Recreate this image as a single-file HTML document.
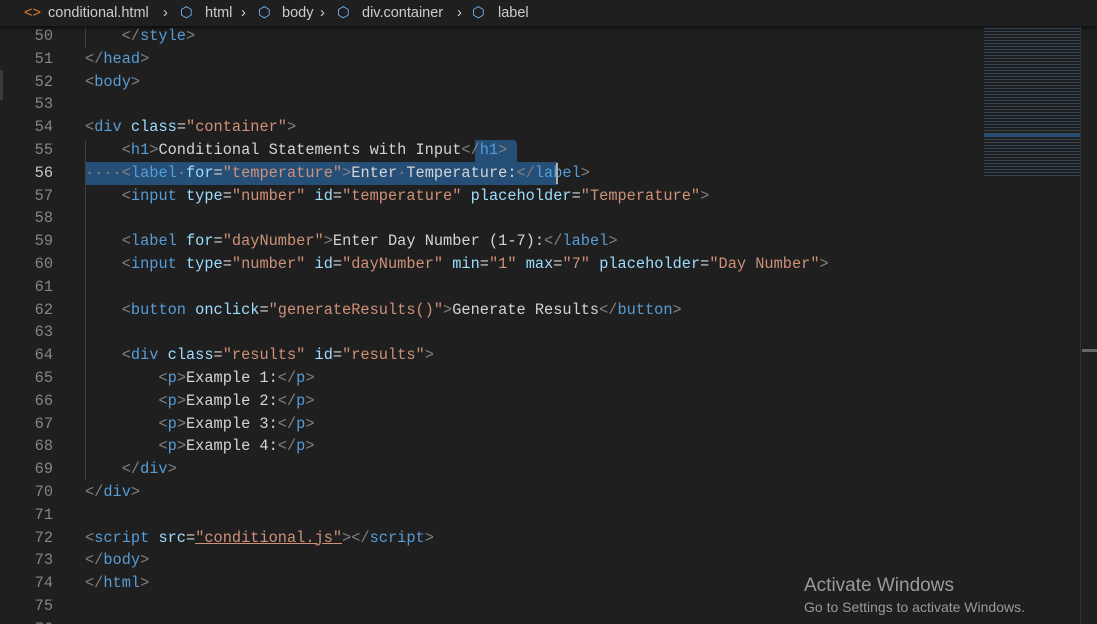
<!DOCTYPE html>
<html><head><style>
html,body{margin:0;width:1097px;height:624px;overflow:hidden}
body{background:#1f1f1f;font-family:"Liberation Mono",monospace;position:relative}
.bc{position:absolute;left:0;top:0;width:1097px;height:26px;background:#1f1f1f;font-family:"Liberation Sans",sans-serif;font-size:14.5px;color:#cccccc;line-height:26px;box-shadow:0 2px 4px #000a}
.bc span{position:absolute;top:0}
.code{position:absolute;left:0;top:25px;font-size:15.3px;line-height:22.8px;white-space:pre;color:#d4d4d4}
.ln{display:inline-block;width:53px;text-align:right;color:#858585;margin-right:32px}
.t{color:#808080}.n{color:#569cd6}.a{color:#9cdcfe}.s{color:#ce9178}
.sel{position:absolute;left:85px;top:162px;width:473px;height:23px;background:#264f78}
.sel2{position:absolute;left:475px;top:140px;width:42px;height:22px;background:#264f78;border-radius:0 4px 0 0}
.guide{position:absolute;left:85px;width:1px;background:#404040}
.wm{position:absolute;left:804px;font-family:"Liberation Sans",sans-serif;color:#9a9a9a}
</style></head><body>
<div class="sel2"></div><div class="sel"></div>
<div class="guide" style="top:26px;height:22px"></div>
<div class="guide" style="top:140px;height:340px"></div>
<div style="position:absolute;left:0;top:70px;width:3px;height:30px;background:#3a3a3a"></div>
<div class="code"><span class="ln">50</span>    <span class="t">&lt;/</span><span class="n">style</span><span class="t">&gt;</span>
<span class="ln">51</span><span class="t">&lt;/</span><span class="n">head</span><span class="t">&gt;</span>
<span class="ln">52</span><span class="t">&lt;</span><span class="n">body</span><span class="t">&gt;</span>
<span class="ln">53</span>
<span class="ln">54</span><span class="t">&lt;</span><span class="n">div</span> <span class="a">class</span>=<span class="s">"container"</span><span class="t">&gt;</span>
<span class="ln">55</span>    <span class="t">&lt;</span><span class="n">h1</span><span class="t">&gt;</span>Conditional Statements with Input<span class="t">&lt;/</span><span class="n">h1</span><span class="t">&gt;</span>
<span class="ln" style="color:#c6c6c6">56</span><span class="t">····&lt;</span><span class="n">label</span><span class="t">·</span><span class="a">for</span>=<span class="s">"temperature"</span><span class="t">&gt;</span>Enter<span class="t">·</span>Temperature:<span class="t">&lt;/</span><span class="n">label</span><span class="t">&gt;</span>
<span class="ln">57</span>    <span class="t">&lt;</span><span class="n">input</span> <span class="a">type</span>=<span class="s">"number"</span> <span class="a">id</span>=<span class="s">"temperature"</span> <span class="a">placeholder</span>=<span class="s">"Temperature"</span><span class="t">&gt;</span>
<span class="ln">58</span>
<span class="ln">59</span>    <span class="t">&lt;</span><span class="n">label</span> <span class="a">for</span>=<span class="s">"dayNumber"</span><span class="t">&gt;</span>Enter Day Number (1-7):<span class="t">&lt;/</span><span class="n">label</span><span class="t">&gt;</span>
<span class="ln">60</span>    <span class="t">&lt;</span><span class="n">input</span> <span class="a">type</span>=<span class="s">"number"</span> <span class="a">id</span>=<span class="s">"dayNumber"</span> <span class="a">min</span>=<span class="s">"1"</span> <span class="a">max</span>=<span class="s">"7"</span> <span class="a">placeholder</span>=<span class="s">"Day Number"</span><span class="t">&gt;</span>
<span class="ln">61</span>
<span class="ln">62</span>    <span class="t">&lt;</span><span class="n">button</span> <span class="a">onclick</span>=<span class="s">"generateResults()"</span><span class="t">&gt;</span>Generate Results<span class="t">&lt;/</span><span class="n">button</span><span class="t">&gt;</span>
<span class="ln">63</span>
<span class="ln">64</span>    <span class="t">&lt;</span><span class="n">div</span> <span class="a">class</span>=<span class="s">"results"</span> <span class="a">id</span>=<span class="s">"results"</span><span class="t">&gt;</span>
<span class="ln">65</span>        <span class="t">&lt;</span><span class="n">p</span><span class="t">&gt;</span>Example 1:<span class="t">&lt;/</span><span class="n">p</span><span class="t">&gt;</span>
<span class="ln">66</span>        <span class="t">&lt;</span><span class="n">p</span><span class="t">&gt;</span>Example 2:<span class="t">&lt;/</span><span class="n">p</span><span class="t">&gt;</span>
<span class="ln">67</span>        <span class="t">&lt;</span><span class="n">p</span><span class="t">&gt;</span>Example 3:<span class="t">&lt;/</span><span class="n">p</span><span class="t">&gt;</span>
<span class="ln">68</span>        <span class="t">&lt;</span><span class="n">p</span><span class="t">&gt;</span>Example 4:<span class="t">&lt;/</span><span class="n">p</span><span class="t">&gt;</span>
<span class="ln">69</span>    <span class="t">&lt;/</span><span class="n">div</span><span class="t">&gt;</span>
<span class="ln">70</span><span class="t">&lt;/</span><span class="n">div</span><span class="t">&gt;</span>
<span class="ln">71</span>
<span class="ln">72</span><span class="t">&lt;</span><span class="n">script</span> <span class="a">src</span>=<span class="s" style="text-decoration:underline">"conditional.js"</span><span class="t">&gt;&lt;/</span><span class="n">script</span><span class="t">&gt;</span>
<span class="ln">73</span><span class="t">&lt;/</span><span class="n">body</span><span class="t">&gt;</span>
<span class="ln">74</span><span class="t">&lt;/</span><span class="n">html</span><span class="t">&gt;</span>
<span class="ln">75</span>
<span class="ln">76</span></div>
<div style="position:absolute;left:556px;top:163px;width:2px;height:21px;background:#aeafad"></div>
<div class="bc">
<span style="left:24px;color:#e37933">&lt;&gt;</span>
<span style="left:48px">conditional.html</span><span style="left:163px">›</span>
<span style="left:180px;color:#75beff">⬡</span><span style="left:205px">html</span><span style="left:241px">›</span>
<span style="left:258px;color:#75beff">⬡</span><span style="left:282px">body</span><span style="left:320px">›</span>
<span style="left:337px;color:#75beff">⬡</span><span style="left:362px">div.container</span><span style="left:457px">›</span>
<span style="left:472px;color:#75beff">⬡</span><span style="left:498px">label</span>
</div>
<div style="position:absolute;left:984px;top:26px;width:96px;height:150px;opacity:.5;background:repeating-linear-gradient(#1f1f1f 0 2px,#4a6a8a 2px 3px);"></div>
<div style="position:absolute;left:984px;top:134px;width:97px;height:3px;background:#264f78"></div>
<div style="position:absolute;left:1080px;top:26px;width:1px;height:598px;background:#333"></div>
<div style="position:absolute;left:1082px;top:349px;width:15px;height:3px;background:#666"></div>
<div class="wm" style="top:575px;font-size:19px">Activate Windows</div>
<div class="wm" style="top:599px;font-size:14px">Go to Settings to activate Windows.</div>
</body></html>
